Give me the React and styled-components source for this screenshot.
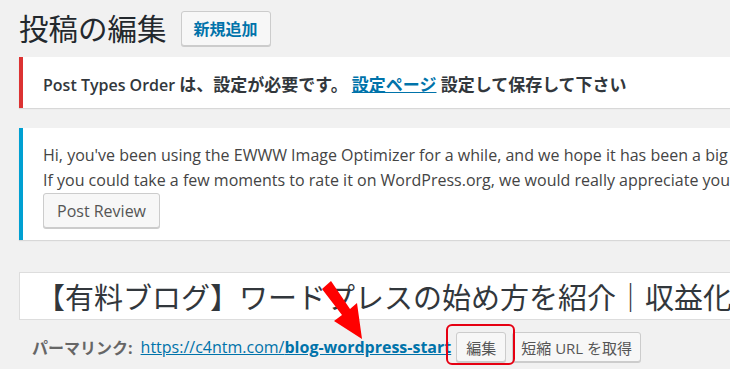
import styled, { createGlobalStyle } from "styled-components";

const GlobalStyle = createGlobalStyle`
  html {
    overflow: hidden;
    background: #f1f1f1;
  }
  body {
    margin: 0;
    min-height: 100vh;
    font-family: "Open Sans", "Noto Sans CJK JP", sans-serif;
    color: #444;
  }
`;

const Page = styled.div`
  width: 790px;
  padding: 9px 0 0 19px;
`;

const Header = styled.div`
  display: flex;
  align-items: center;
  gap: 14px;
  height: 38px;
`;

const Title = styled.h1`
  margin: 0;
  font-size: 29.5px;
  font-weight: 400;
  color: #23282d;
  font-family: "Noto Sans CJK JP", sans-serif;
  line-height: 1;
`;

const Button = styled.button`
  display: inline-flex;
  align-items: center;
  justify-content: center;
  height: ${(p) => p.$h || 30}px;
  padding: 0 ${(p) => p.$px || 10}px;
  border: 1px solid #ccc;
  border-radius: 3px;
  background: #f7f7f7;
  box-shadow: 0 1px 0 #ccc;
  color: ${(p) => (p.$primary ? "#0073aa" : "#555")};
  font-weight: ${(p) => (p.$primary ? 700 : 400)};
  font-size: ${(p) => p.$fs || 15}px;
  font-family: "Open Sans", "Noto Sans CJK JP", sans-serif;
  white-space: nowrap;
`;

const Notice = styled.div`
  background: #fff;
  border-left: 4px solid ${(p) => p.$accent};
  box-shadow: 0 1px 1px rgba(0, 0, 0, 0.1);
  margin-top: ${(p) => p.$mt}px;
  padding: ${(p) => p.$pad};
  font-size: 16px;
  white-space: nowrap;
`;

const NoticeText = styled.p`
  margin: 0;
  line-height: 25px;
  color: #444;
`;

const Strong = styled.span`
  font-weight: 600;
  color: #32373c;
`;

const Jp = styled.span`
  font-size: 17px;
  font-weight: 700;
`;

const Link = styled.a`
  color: #0073aa;
  text-decoration: underline;
  font-weight: ${(p) => (p.$bold ? 700 : 400)};
`;

const TitleBox = styled.div`
  margin-top: 32px;
  height: 46px;
  background: #fff;
  border: 1px solid #ddd;
  display: flex;
  align-items: center;
  padding-left: 16px;
  font-family: "Noto Sans CJK JP", sans-serif;
  font-size: 29px;
  color: #32373c;
  white-space: nowrap;
  overflow: hidden;
`;

const PermalinkRow = styled.div`
  display: flex;
  align-items: center;
  gap: 6px;
  height: 30px;
  margin-top: 12px;
  padding-left: 13px;
  font-size: 16px;
  white-space: nowrap;
`;

const Label = styled.span`
  font-weight: 700;
  color: #666;
  margin-right: 2px;
`;

const Highlight = styled.span`
  position: relative;
  display: inline-flex;
  margin-left: -1px;
  &::after {
    content: "";
    position: absolute;
    left: -10px;
    top: -8px;
    right: -9px;
    bottom: -3px;
    border: 2px solid #e60012;
    border-radius: 6px;
  }
`;

const Arrow = styled.svg`
  position: absolute;
  left: 0;
  top: 0;
  pointer-events: none;
`;

export default function App() {
  return (
    <>
      <GlobalStyle />
      <Page>
        <Header>
          <Title>投稿の編集</Title>
          <Button $primary $h={35} $px={12} $fs={16}>
            新規追加
          </Button>
        </Header>
        <Notice $accent="#dc3232" $mt={10} $pad="15px 20px 10px">
          <NoticeText>
            <Strong>
              Post Types Order <Jp>は、設定が必要です。</Jp>
            </Strong>{" "}
            <Link $bold>
              <Jp>設定ページ</Jp>
            </Link>{" "}
            <Strong>
              <Jp>設定して保存して下さい</Jp>
            </Strong>
          </NoticeText>
        </Notice>
        <Notice $accent="#00a0d2" $mt={20} $pad="15px 20px 12px">
          <NoticeText>
            Hi, you've been using the EWWW Image Optimizer for a while, and we hope it has been a big help to you.
          </NoticeText>
          <NoticeText>
            If you could take a few moments to rate it on WordPress.org, we would really appreciate your help making the plugin better.
          </NoticeText>
          <Button $h={35} $px={13} $fs={16}>
            Post Review
          </Button>
        </Notice>
        <TitleBox>【有料ブログ】ワードプレスの始め方を紹介｜収益化のコツ</TitleBox>
        <PermalinkRow>
          <Label>パーマリンク:</Label>
          <Link>
            https://c4ntm.com/<b>blog-wordpress-start</b>
          </Link>
          <Highlight>
            <Button $h={30} $px={9} $fs={15}>
              編集
            </Button>
          </Highlight>
          <Button $h={30} $px={8} $fs={15}>
            短縮 URL を取得
          </Button>
        </PermalinkRow>
      </Page>
      <Arrow width="730" height="369" viewBox="0 0 730 369">
        <path
          d="M322 289 L331 281 L350 309 L357 303 L362 339 L334 321 L342 315 Z"
          fill="#f00"
        />
      </Arrow>
    </>
  );
}
